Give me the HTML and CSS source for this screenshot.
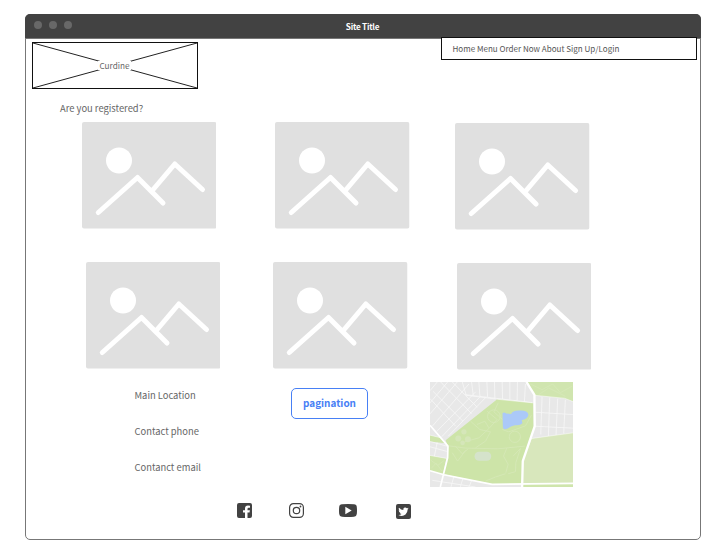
FILE: index.html
```html
<!DOCTYPE html>
<html lang="en">
<head>
<meta charset="utf-8">
<title>Site Title</title>
<link rel="stylesheet" href="styles.css">
</head>
<body>
<svg class="defs" width="0" height="0" aria-hidden="true">
  <symbol id="placeholder" viewBox="0 0 134.500 107">
    <rect width="134.500" height="106.500" rx="2" fill="#e0e0e0"/>
    <circle cx="37" cy="38.500" r="13" fill="#fff"/>
    <path d="M16.300 90.500 55.500 55.500 81 81M69.500 69.500 92.800 42 120.500 67.500" fill="none" stroke="#fff" stroke-width="5" stroke-linecap="round" stroke-linejoin="round"/>
  </symbol>
</svg>
<div class="window">
  <header class="titlebar">
    <div class="dots"><i></i><i></i><i></i></div>
    <h1>Site Title</h1>
  </header>
  <div class="top">
    <div class="logo">
      <svg viewBox="0 0 164 45" preserveAspectRatio="none"><path d="M0 0 164 45M164 0 0 45" stroke="#222" stroke-width="1" fill="none"/></svg>
      <span>Curdine</span>
    </div>
    <nav>Home Menu Order Now About Sign Up/Login</nav>
  </div>
  <p class="question">Are you registered?</p>
  <div class="gallery first">
    <svg><use href="#placeholder"/></svg>
    <svg><use href="#placeholder"/></svg>
    <svg><use href="#placeholder"/></svg>
  </div>
  <div class="gallery second">
    <svg><use href="#placeholder"/></svg>
    <svg><use href="#placeholder"/></svg>
    <svg><use href="#placeholder"/></svg>
  </div>
  <div class="details">
    <div class="contact"><p>Main Location</p><p>Contact phone</p><p>Contanct email</p></div>
    <button>pagination</button>
    <svg class="map" viewBox="13 12 430 316" preserveAspectRatio="none">
      <rect x="13" y="12" width="430" height="316" fill="#e8e8e8"/>
      <g stroke="#f6f6f6" stroke-width="2.500" fill="none">
        <path d="M13 38 35 12M13 75 66 12M13 108 95 12M20 145 130 18M34 160 150 42M48 177 165 55M68 175 182 57M13 62 90 145M22 40 112 130M45 12 138 107M80 12 155 88M110 12 122 52 210 63M118 50 320 74M138 12 143 52M160 12 163 54M184 12 186 57M207 12 208 62M230 12 231 63M253 12 253 65M276 12 275 68M300 18 297 70M350 57 346 170M373 59 369 174M397 62 392 172M420 66 415 167M330 103 443 110M328 145 443 151M13 207 64 221M35 192 26 236M85 296 76 328M112 302 104 328M139 307 130 328M20 308 150 328"/>
      </g>
      <path d="M215 64 324 75 325 150 292 250 290 318 200 320 54 290 66 240 67 205 60 187Z" fill="#cde4a8"/>
      <path d="M307 12H443V71L418 62 327 52Z" fill="#d0e5af"/>
      <path d="M319 182 443 165V317L292 318 292 250Z" fill="#d8e7bc"/>
      <path d="M13 172 46 180 60 196 13 191ZM13 233 62 242 52 290 13 279ZM293 319H443V328H291Z" fill="#cfe5ac"/>
      <g stroke="#d6e8b8" stroke-width="2.500" fill="none">
        <path d="M185 100 215 125 190 152 160 180 118 192M135 130 163 155 195 162 180 190 150 210M218 75 205 102 231 125M154 140 178 130 190 150M68 204 120 211 218 213 298 205M88 204 110 228 128 213M80 225 96 250 120 218M231 155 250 162 300 144 318 112M244 211 234 235 248 260 241 285M263 235 285 212 271 255 270 282 248 288M180 310 210 298 240 288M315 18 350 35 382 18 405 44 440 25M340 50 370 30 420 55M15 247 36 263 56 248M17 272 31 256 49 280"/>
        <circle cx="268" cy="177" r="17"/><circle cx="205" cy="115" r="19"/>
      </g>
      <g fill="#d5e6b9"><circle cx="115" cy="162" r="8"/><circle cx="98" cy="182" r="9"/><circle cx="127" cy="184" r="9"/><circle cx="111" cy="195" r="7"/></g>
      <rect x="147" y="222" width="50" height="27" rx="13" fill="#d5e3cb"/>
      <path d="M231 106Q236 101 242 107L257 108Q260 99 280 98 306 96 309 110 309 122 289 127L291 136Q284 144 268 142 253 146 245 153 232 158 232 145Z" fill="#abc9f8"/>
      <g fill="none" stroke="#fff" stroke-linejoin="round">
        <path d="M215 64 324 75M318 182 443 165M327 52 418 61 443 71M13 172 46 180M13 191 64 205M13 233 64 242" stroke-width="2.500" opacity=".6"/>
        <path d="M13 142 67 205 66 240 44 328M13 279 55 291 200 320 443 317" stroke-width="5"/>
        <path d="M303 12 327 51 328 145 292 250 290 328" stroke-width="7"/>
      </g>
    </svg>
  </div>
  <footer>
    <svg class="facebook" viewBox="0 0 15 15"><path fill="#424242" d="M2 0H13Q15 0 15 2V13Q15 15 13 15H10.500V9.500H12.500L12.900 7.200H10.500V5.900Q10.500 4.800 11.700 4.800H13V2.700Q12 2.500 11 2.500 8 2.500 8 5.500V7.200H6V9.500H8V15H2Q0 15 0 13V2Q0 0 2 0Z"/></svg>
    <svg class="instagram" viewBox="0 0 15 15"><g fill="none" stroke="#424242" stroke-width="1.200"><rect x=".6" y=".6" width="13.800" height="13.800" rx="3.800"/><circle cx="7.500" cy="7.500" r="3.200"/></g><circle cx="11.500" cy="3.500" r=".9" fill="#424242"/></svg>
    <svg class="youtube" viewBox="0 0 18 13"><path fill="#424242" fill-rule="evenodd" d="M3 .2Q9-.2 15 .2 17.600.3 17.800 3 18.200 6.500 17.800 10 17.600 12.600 15 12.800 9 13.200 3 12.800.4 12.600.2 10-.2 6.500.2 3 .4.300 3 .2ZM6.300 2.800V10.200L12.700 6.500Z"/></svg>
    <svg class="twitter" viewBox="0 0 15 15"><rect width="15" height="15" rx="2" fill="#424242"/><path fill="#fff" d="M12.700 4.600 11.600 5.600Q11.700 8.600 9.500 10.600 6.300 13 2.400 11 4.300 11.100 5.500 10.100 4 9.900 3.500 8.600H4.400Q2.700 7.900 2.700 6.300L3.600 6.600Q2.200 5.300 3 3.800 4.800 5.800 7.400 6 7 3.900 8.900 3.500 10 3.300 10.900 4.200L12.300 3.700 11.500 4.800Z"/></svg>
  </footer>
</div>
</body>
</html>
```
FILE: styles.css
```css
* { box-sizing: border-box; }
body {
  margin: 0;
  padding: 14px 16px 10px 25px;
  background: #fff;
  color: #666;
  font-family: "Noto Sans CJK SC", "Noto Sans", sans-serif;
  font-size: 9.400px;
}
svg { display: block; }
.defs { position: absolute; }
p, h1 { margin: 0; font-weight: 400; }
.window {
  height: 526px;
  border: 1px solid #777;
  border-radius: 5px;
}
.titlebar {
  display: grid;
  grid-template-columns: 1fr auto 1fr;
  align-items: center;
  height: 25px;
  margin: -1px -1px 0;
  padding: 0 9.500px 0 8.500px;
  background: #424242;
  border-bottom: 1px solid #777;
  border-radius: 5px 5px 0 0;
}
.titlebar h1 { color: #fff; font-size: 8.200px; font-weight: 700; line-height: 24px; letter-spacing: -.25px; }
.dots { display: flex; gap: 7px; margin-top: -2px; }
.dots i { width: 8px; height: 8px; border-radius: 50%; background: #686868; }
.top { display: flex; justify-content: space-between; height: 50px; padding: 0 3px 0 6px; }
.logo { display: grid; width: 166px; height: 47px; margin-top: 3px; border: 1px solid #111; place-items: center; }
.logo svg, .logo span { grid-area: 1 / 1; }
.logo svg { width: 164px; height: 45px; }
.logo span { margin: -1px 1px 0 0; padding: 0 1px; background: #fff; font-size: 8.200px; line-height: 9px; }
nav {
  width: 256px;
  height: 23px;
  margin-top: -2px;
  padding-left: 10.500px;
  border: 1px solid #111;
  background: #fff;
  color: #555;
  font-size: 8.050px;
  line-height: 21px;
}
.question { height: 33px; padding-left: 34px; line-height: 38px; }
.gallery { display: flex; }
.gallery svg { flex: none; width: 134.500px; height: 107px; }
.first { height: 140px; padding-left: 55.500px; column-gap: 59.400px; }
.first svg:last-child { margin: 1px 0 0 -13.900px; }
.second { height: 120px; padding-left: 59.600px; column-gap: 53px; }
.second svg:last-child { margin: 1px 0 0 -4px; }
.details { display: flex; height: 121px; padding-left: 108.500px; }
.contact { width: 157px; margin-top: -5px; line-height: 36px; }
button {
  width: 77px;
  height: 31px;
  margin: 6px 61.500px 0 -.5px;
  padding: 0 0 2px;
  border: 1px solid #4880f5;
  border-radius: 5px;
  background: #fff;
  color: #4880f5;
  font: 700 9.950px "Noto Sans CJK SC", "Noto Sans", sans-serif;
}
.map { width: 143px; height: 105px; }
footer { display: flex; padding-left: 211px; }
footer svg { width: 15px; height: 15px; }
.instagram { margin-left: 37px; }
footer .youtube { width: 18px; height: 13px; margin: 1px 0 0 35px; }
.twitter { margin: 1px 0 0 39px; }
```
